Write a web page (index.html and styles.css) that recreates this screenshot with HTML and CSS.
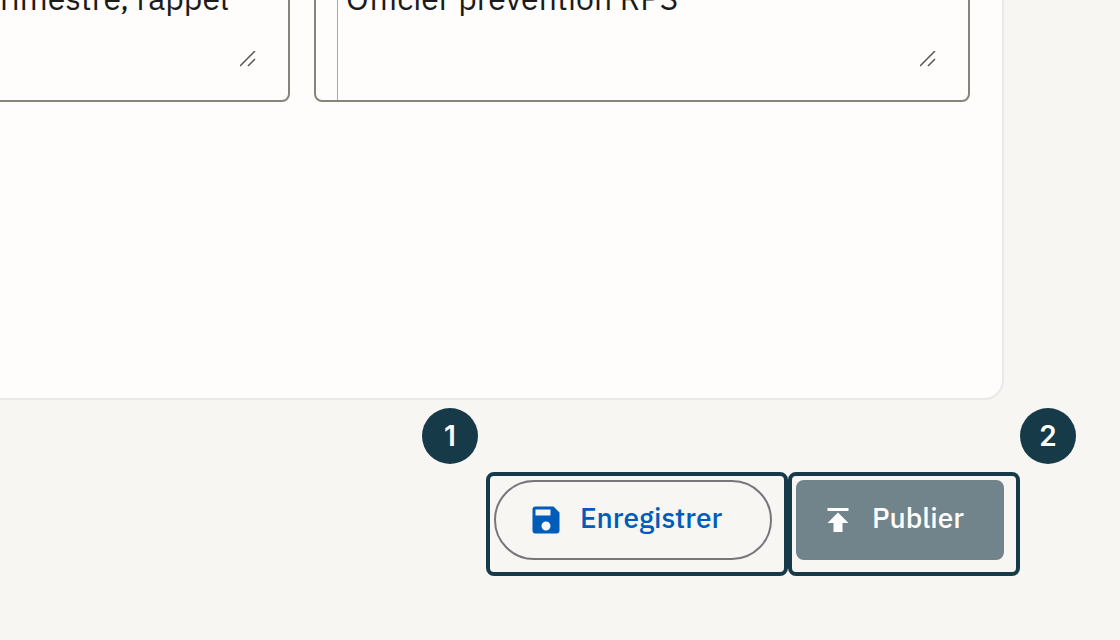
FILE: index.html
```html
<!DOCTYPE html>
<html lang="fr">
<head>
    <meta charset="UTF-8">
    <meta name="viewport" content="width=device-width, initial-scale=1.0">
    <title>Publier</title>
    <link rel="stylesheet" href="styles.css">
</head>
<body>

    <main class="card">
        <div class="fields">
            <div class="field field-left">
                <textarea aria-label="Description">rimestre, rappel</textarea>
                <svg class="grip" viewBox="0 0 16 16" aria-hidden="true"><path d="M0 15L15 0M8 15l7-7"/></svg>
            </div>
            <div class="field field-right">
                <textarea aria-label="Public">Officier prévention RPS</textarea>
                <svg class="grip" viewBox="0 0 16 16" aria-hidden="true"><path d="M0 15L15 0M8 15l7-7"/></svg>
            </div>
        </div>
    </main>

    <!-- Numbered actions -->
    <div class="actions">
        <div class="step">
            <span class="badge badge-left">1</span>
            <button type="button" class="save">
                <svg class="icon" viewBox="0 0 24 24" aria-hidden="true"><path d="M15 9H5V5h10m-3 14a3 3 0 0 1-3-3 3 3 0 0 1 3-3 3 3 0 0 1 3 3 3 3 0 0 1-3 3m5-16H5a2 2 0 0 0-2 2v14a2 2 0 0 0 2 2h14a2 2 0 0 0 2-2V7l-4-4z"/></svg>
                <span class="label">Enregistrer</span>
            </button>
        </div>
        <div class="step">
            <span class="badge badge-right">2</span>
            <button type="button" class="publish">
                <svg class="icon" viewBox="0 0 24 24" aria-hidden="true"><path d="M5 4v2h14V4H5zm0 10h4v6h6v-6h4l-7-7-7 7z"/></svg>
                <span class="label">Publier</span>
            </button>
        </div>
    </div>

</body>
</html>
```

FILE: styles.css
```css
* {
    box-sizing: border-box;
}
body {
    margin: 0;
    overflow: hidden;
    background-color: #f7f6f3;
    font-family: "IBM Plex Sans", "Noto Sans", sans-serif;
    color: #1b1b1b;
}
/* The card runs past the top and left edges of the window */
.card {
    margin: -100px 116px 0 -400px;
    padding: 32px 32px 296px;
    background-color: #fefdfb;
    border: 2px solid #eae9e5;
    border-radius: 20px;
}
.fields {
    display: grid;
    grid-template-columns: repeat(2, minmax(0, 1fr));
    gap: 24px;
}
.field {
    position: relative;
    display: flex;
    height: 168px;
    border: 2px solid #87857b;
    border-radius: 8px;
}
.field textarea {
    flex: 1;
    min-width: 0;
    padding: 38px 32px 0 8px;
    border: 0;
    outline: 0;
    resize: none;
    overflow: hidden;
    background: none;
    color: inherit;
    font: inherit;
    font-size: 32px;
    line-height: 48px;
}
.field-left textarea {
    padding-left: 364px;
}
.field-right textarea {
    margin-left: 21px;
    border-left: 1px solid #aaa9a5;
}
.grip {
    position: absolute;
    right: 32px;
    bottom: 33px;
    width: 16px;
    height: 16px;
    fill: none;
    stroke: #555;
    stroke-width: 1.5;
}
.actions {
    display: flex;
    justify-content: flex-end;
    margin: 72px 100px 0 0;
}
.step {
    position: relative;
    padding: 4px 12px 12px 4px;
    border: 4px solid #173a49;
    border-radius: 8px;
}
.badge {
    position: absolute;
    top: -68px;
    width: 56px;
    height: 56px;
    border-radius: 50%;
    background-color: #173a49;
    color: #fff;
    font: 600 28px/56px Inter, sans-serif;
    text-align: center;
}
.badge-left {
    left: -68px;
}
.badge-right {
    right: -60px;
}
button {
    display: flex;
    align-items: center;
    gap: 16px;
    height: 80px;
    font: inherit;
    font-size: 28px;
    font-weight: 500;
    cursor: pointer;
}
.icon {
    width: 36px;
    height: 36px;
    fill: currentColor;
}
.label {
    padding-bottom: 6px;
}
.save {
    width: 278px;
    padding: 0 32px;
    border: 2px solid #77767a;
    border-radius: 40px;
    background: none;
    color: #005cb9;
}
.publish {
    width: 208px;
    padding: 0 24px;
    border: 0;
    border-radius: 8px;
    background-color: #71838b;
    color: #fff;
}
```
